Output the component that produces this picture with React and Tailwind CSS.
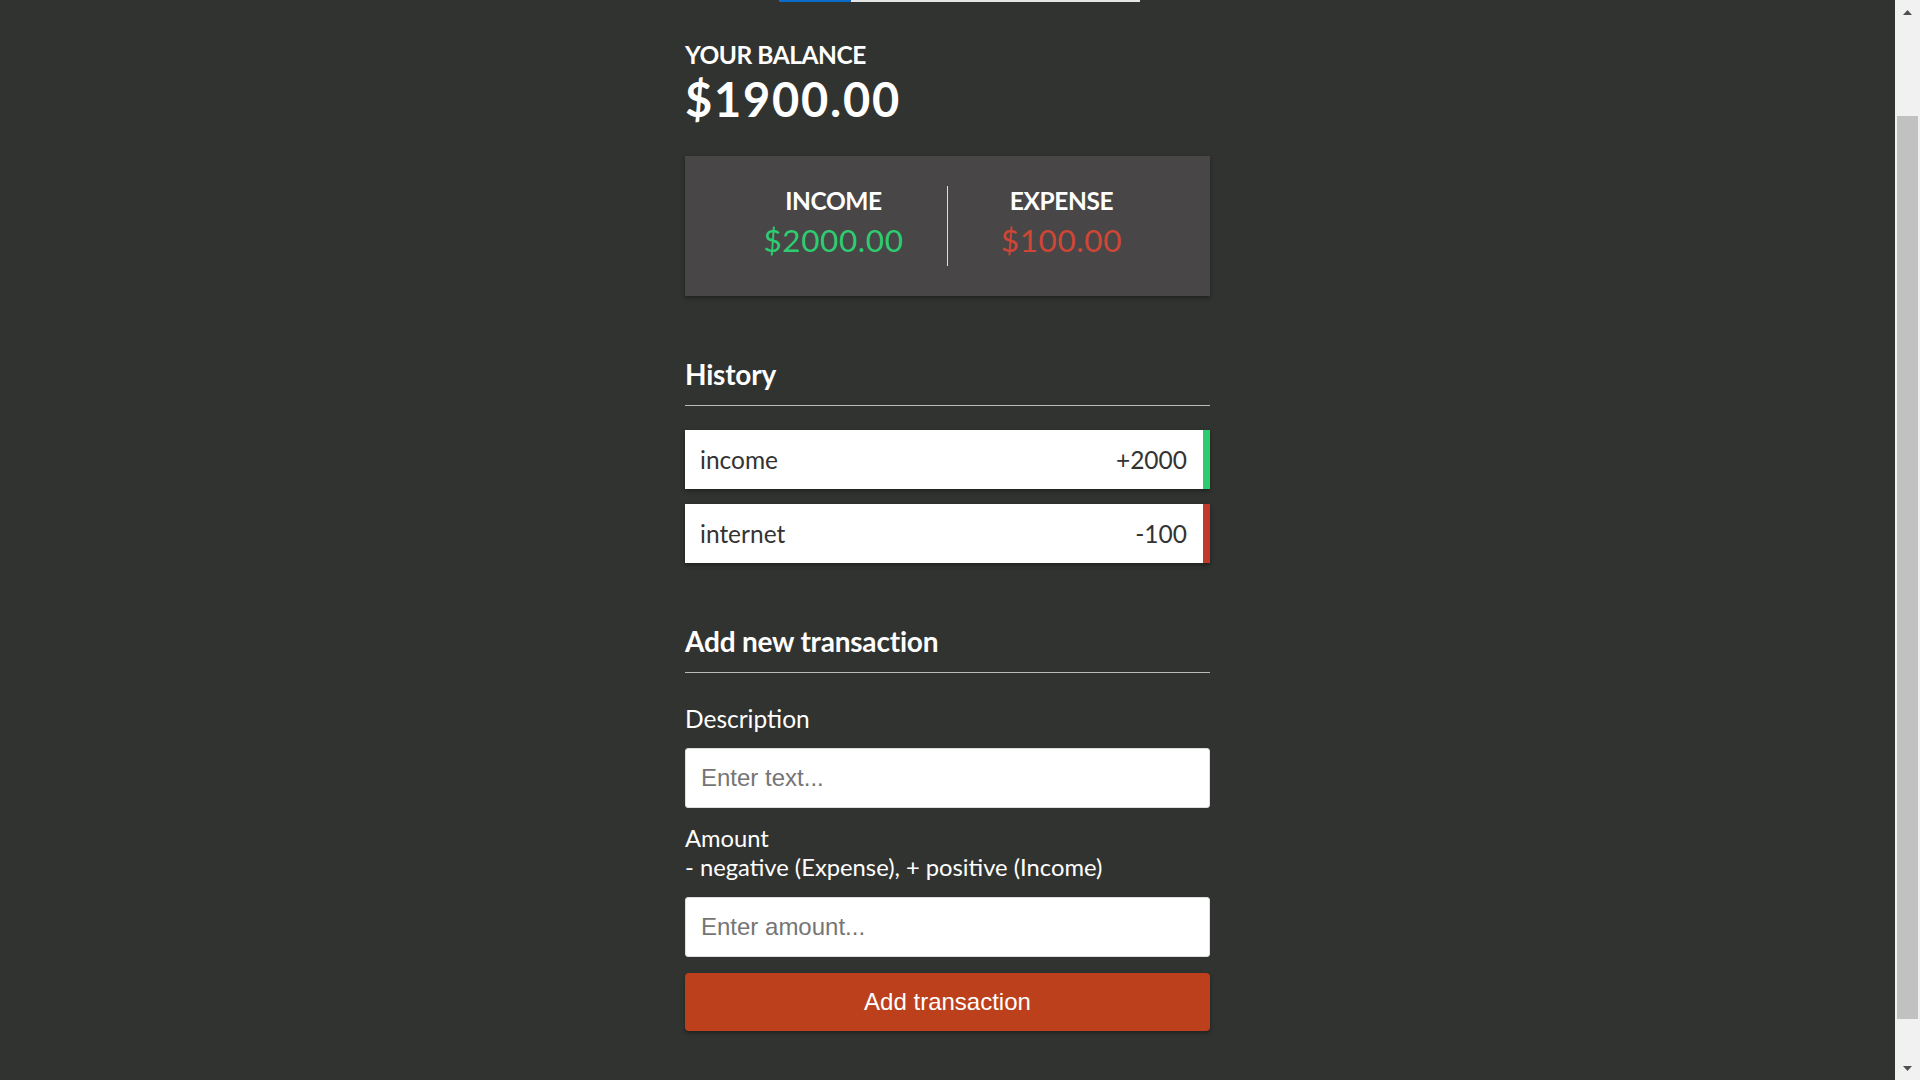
export default function App() {
  const shadow = "shadow-[0_2px_5px_rgba(0,0,0,0.12),0_2px_3.5px_rgba(0,0,0,0.24)]";
  return (
    <div className="flex h-screen w-full overflow-hidden bg-[#313330] font-['Lato',sans-serif]">
      <main className="flex flex-1 flex-col">
        <div className="ml-[779px] flex h-[2px] w-[361px]">
          <div className="w-[72px] bg-[#0b6bcb]" />
          <div className="flex-1 bg-[#e6e6e6]" />
        </div>
        <div className="mx-auto flex w-[525px] flex-col">
          <h4 className="mt-[38px] text-[24.5px] font-bold uppercase leading-[29px] tracking-[-0.45px] text-white">
            Your Balance
          </h4>
          <h1 className="mt-[2px] text-[47px] font-bold leading-[56px] tracking-[1.75px] text-white">
            $1900.00
          </h1>

          <div className={`mt-[29px] flex bg-[#484647] px-[35px] py-[30px] ${shadow}`}>
            <div className="flex-1 border-r border-[#dedede] text-center">
              <h4 className="text-[24.5px] font-bold uppercase leading-[29px] tracking-[-0.4px] text-white">
                Income
              </h4>
              <p className="mb-[7px] mt-[6px] text-[31.5px] leading-[38px] tracking-[0.6px] text-[#2ecc71]">
                $2000.00
              </p>
            </div>
            <div className="flex-1 text-center">
              <h4 className="text-[24.5px] font-bold uppercase leading-[29px] tracking-[-0.4px] text-white">
                Expense
              </h4>
              <p className="mb-[7px] mt-[6px] text-[31.5px] leading-[38px] tracking-[0.6px] text-[#cf4636]">
                $100.00
              </p>
            </div>
          </div>

          <h3 className="mt-[61px] border-b border-[#bbbbbb] pb-[14px] text-[28px] font-bold leading-[34px] tracking-[-0.2px] text-white">
            History
          </h3>
          <ul className="mt-[24px] flex flex-col gap-[15px]">
            <li className={`flex justify-between border-r-[7px] border-[#2ecc71] bg-white py-[15px] pl-[15px] pr-[16px] text-[24.5px] leading-[29px] text-[#333] ${shadow}`}>
              <span>income</span>
              <span>+2000</span>
            </li>
            <li className={`flex justify-between border-r-[7px] border-[#c0392b] bg-white py-[15px] pl-[15px] pr-[16px] text-[24.5px] leading-[29px] text-[#333] ${shadow}`}>
              <span>internet</span>
              <span>-100</span>
            </li>
          </ul>

          <h3 className="mt-[61px] border-b border-[#bbbbbb] pb-[14px] text-[28px] font-bold leading-[34px] tracking-[-0.2px] text-white">
            Add new transaction
          </h3>
          <form className="flex flex-col" onSubmit={(e) => e.preventDefault()}>
            <label className="mt-[31px] text-[24.5px] leading-[29px] text-white">Description</label>
            <input
              type="text"
              placeholder="Enter text..."
              className="mt-[15px] h-[60px] w-full rounded-[3px] border border-[#dedede] bg-white px-[15px] font-['Liberation_Sans',Arial,sans-serif] text-[24px] text-[#333] outline-none placeholder:text-[#757575]"
            />
            <label className="mt-[16px] text-[23.75px] leading-[29px] text-white">
              Amount
              <br />- negative (Expense), + positive (Income)
            </label>
            <input
              type="text"
              placeholder="Enter amount..."
              className="mt-[15px] h-[60px] w-full rounded-[3px] border border-[#dedede] bg-white px-[15px] font-['Liberation_Sans',Arial,sans-serif] text-[24px] text-[#333] outline-none placeholder:text-[#757575]"
            />
            <button
              type="submit"
              className={`mt-[16px] h-[58px] w-full rounded-[4px] bg-[#bb401b] font-['Liberation_Sans',Arial,sans-serif] text-[24px] text-white ${shadow}`}
            >
              Add transaction
            </button>
          </form>
        </div>
      </main>

      <aside className="flex h-full w-[25px] flex-col bg-[#f1f1f1]">
        <div className="flex h-[24px] items-center justify-center">
          <svg width="9" height="5" viewBox="0 0 9 5">
            <polygon points="0,5 4.5,0 9,5" fill="#505050" />
          </svg>
        </div>
        <div className="h-[92px]" />
        <div className="mx-[2px] h-[903px] bg-[#c1c1c1]" />
        <div className="flex-1" />
        <div className="flex h-[24px] items-center justify-center">
          <svg width="9" height="5" viewBox="0 0 9 5">
            <polygon points="0,0 4.5,5 9,0" fill="#505050" />
          </svg>
        </div>
      </aside>
    </div>
  );
}
